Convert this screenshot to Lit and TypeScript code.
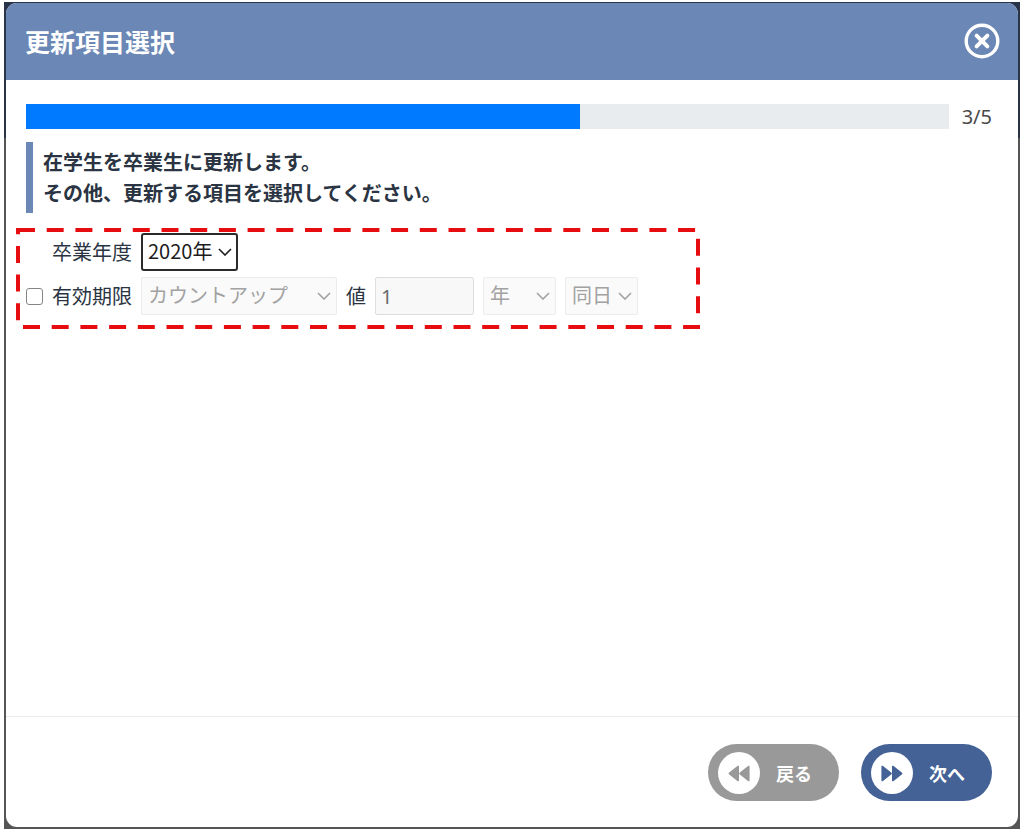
import { LitElement, html, css, svg } from "lit";
import { customElement, property, state } from "lit/decorators.js";

const baseFont = css`"Noto Sans", "Noto Sans CJK JP", sans-serif`;
const jpFont = css`"Noto Sans CJK JP", "Noto Sans", sans-serif`;

@customElement("select-box")
class SelectBox extends LitElement {
  static styles = css`
    :host {
      display: block;
    }
    .wrap {
      display: grid;
      align-items: center;
    }
    .field {
      grid-area: 1 / 1;
      box-sizing: border-box;
      width: 100%;
      height: 38px;
      margin: 0;
      padding: 0 24px 2px 6px;
      appearance: none;
      border: 1px solid #ececec;
      border-radius: 2px;
      background: #fafafa;
      color: #a2a2a2;
      opacity: 1;
      font: 20px/30px ${jpFont};
    }
    .field:enabled {
      border: 2px solid #2b2b2b;
      border-radius: 3px;
      background: #fff;
      color: #1c1c1c;
      padding-left: 5px;
    }
    .arrow {
      grid-area: 1 / 1;
      justify-self: end;
      width: 14px;
      height: 8px;
      margin-right: 6px;
      fill: none;
      stroke: #a2a2a2;
      stroke-width: 1.6;
      pointer-events: none;
    }
    .arrow.on {
      stroke: #1c1c1c;
    }
  `;

  @property() label = "";
  @property({ type: Array }) options: string[] = [];
  @property({ type: Boolean }) disabled = false;

  render() {
    return html`<div class="wrap">
      <select class="field" aria-label=${this.label} ?disabled=${this.disabled}>
        ${this.options.map((o) => html`<option>${o}</option>`)}
      </select>
      <svg class="arrow ${this.disabled ? "" : "on"}" viewBox="0 0 14 8" aria-hidden="true">
        <path d="M1 1l6 6 6-6" />
      </svg>
    </div>`;
  }
}

@customElement("app-root")
class AppRoot extends LitElement {
  static styles = css`
    :host {
      display: flex;
      box-sizing: border-box;
      min-height: 100vh;
      padding: 2px 4px 3px;
      background: #fff;
      color: #2a3442;
      font: 20px/30px ${baseFont};
    }
    .backdrop {
      flex: 1;
      min-width: 0;
      display: flex;
      padding: 1px 2px 2px;
      background: linear-gradient(#2a3448 0, #2a3448 136px, #555 136px);
    }
    .dialog {
      flex: 1;
      min-width: 0;
      display: flex;
      flex-direction: column;
      overflow: hidden;
      border-radius: 11px;
      background: #fff;
    }
    .header {
      display: flex;
      box-sizing: border-box;
      align-items: center;
      justify-content: space-between;
      height: 77px;
      padding: 0 18px 2px 19px;
      background: #6b87b5;
      color: #fff;
    }
    .title {
      margin: 0;
      font: bold 25px/36px ${jpFont};
    }
    .close {
      display: flex;
      padding: 0;
      border: 0;
      background: none;
      cursor: pointer;
    }
    .close-icon {
      width: 36px;
      height: 36px;
      fill: none;
      stroke: #fff;
    }
    .body {
      flex: 1;
      padding: 24px 26px 24px 20px;
    }
    .progress {
      display: flex;
      align-items: center;
      gap: 13px;
      height: 25px;
    }
    .track {
      flex: 1;
      height: 25px;
      background: #e9ecef;
    }
    .bar {
      height: 100%;
      background: #007bff;
    }
    .count {
      color: #4a4a4a;
    }
    .note {
      margin: 13px 0 15px;
      padding: 4px 0 5px 10px;
      border-left: 7px solid #6b87b5;
      font: bold 20px/31px ${jpFont};
    }
    .items {
      position: relative;
      box-sizing: border-box;
      max-width: 684px;
      margin-left: -10px;
      padding: 5px 10px 14px;
      display: grid;
      gap: 6px;
    }
    .outline {
      position: absolute;
      inset: 0;
      width: 100%;
      height: 100%;
      box-sizing: border-box;
      padding: 2px;
      overflow: visible;
      pointer-events: none;
    }
    .outline-rect {
      fill: none;
      stroke: #e60c10;
      stroke-width: 4;
      stroke-dasharray: 17 11.7;
    }
    .row {
      display: flex;
      align-items: center;
      gap: 9px;
      font-family: ${jpFont};
    }
    .mark {
      flex: none;
      box-sizing: border-box;
      width: 17px;
      height: 17px;
      margin: 0;
    }
    .check {
      appearance: none;
      border: 1px solid #858585;
      border-radius: 3px;
      background: #fff;
    }
    .check:checked {
      background: #007bff;
    }
    .label {
      flex: none;
    }
    .year {
      width: 97px;
    }
    .mode {
      width: 196px;
    }
    .short {
      width: 73px;
    }
    .value {
      box-sizing: border-box;
      width: 99px;
      height: 38px;
      padding: 0 5px;
      border: 1px solid #dedede;
      border-radius: 2px;
      background: #f8f8f8;
      color: #6a6a6a;
      font: 20px/30px ${baseFont};
    }
    .footer {
      display: flex;
      justify-content: flex-end;
      gap: 22px;
      padding: 27px 26px 26px;
      border-top: 1px solid #ececec;
    }
    .action {
      display: flex;
      align-items: center;
      gap: 16px;
      width: 131px;
      height: 57px;
      padding: 0 10px;
      border: 0;
      border-radius: 29px;
      background: #999;
      color: #fff;
      font: bold 18px/28px ${jpFont};
      cursor: pointer;
    }
    .action.next {
      background: #456296;
    }
    .disc {
      flex: none;
      width: 42px;
      height: 42px;
    }
    .disc-bg {
      fill: #fff;
    }
    .disc-glyph {
      fill: currentColor;
      stroke: currentColor;
      stroke-width: 1.6;
      stroke-linejoin: round;
      color: #999;
    }
    .next .disc-glyph {
      color: #456296;
    }
  `;

  @state() private step = 3;
  @state() private total = 5;
  @state() private useExpiry = false;

  private disc(path: string) {
    return html`<svg class="disc" viewBox="0 0 42 42" aria-hidden="true">
      ${svg`<circle class="disc-bg" cx="21" cy="21" r="21"/><path class="disc-glyph" d=${path}/>`}
    </svg>`;
  }

  render() {
    const off = !this.useExpiry;
    return html`
      <div class="backdrop">
        <div class="dialog" role="dialog" aria-labelledby="title">
          <header class="header">
            <h1 class="title" id="title">更新項目選択</h1>
            <button class="close" type="button" aria-label="閉じる">
              <svg class="close-icon" viewBox="0 0 36 36" aria-hidden="true">
                <circle cx="18" cy="18" r="15.8" stroke-width="3.4" />
                <path d="M12.6 12.6l10.8 10.8M23.4 12.6l-10.8 10.8" stroke-width="4" stroke-linecap="round" />
              </svg>
            </button>
          </header>
          <main class="body">
            <div class="progress">
              <div class="track" role="progressbar" aria-label="進捗" aria-valuemin="0"
                aria-valuenow=${this.step} aria-valuemax=${this.total}>
                <div class="bar" style="width:${(this.step / this.total) * 100}%"></div>
              </div>
              <span class="count">${this.step}/${this.total}</span>
            </div>
            <p class="note">在学生を卒業生に更新します。<br />その他、更新する項目を選択してください。</p>
            <div class="items">
              <div class="row">
                <span class="mark"></span>
                <span class="label">卒業年度</span>
                <select-box class="year" label="卒業年度" .options=${["2020年"]}></select-box>
              </div>
              <div class="row">
                <input class="mark check" type="checkbox" id="expiry" .checked=${this.useExpiry}
                  @change=${(e: Event) => (this.useExpiry = (e.target as HTMLInputElement).checked)} />
                <label class="label" for="expiry">有効期限</label>
                <select-box class="mode" label="有効期限" .options=${["カウントアップ"]} ?disabled=${off}></select-box>
                <label class="label" for="value">値</label>
                <input class="value" id="value" type="text" value="1" ?disabled=${off} />
                <select-box class="short" label="単位" .options=${["年"]} ?disabled=${off}></select-box>
                <select-box class="short" label="基準日" .options=${["同日"]} ?disabled=${off}></select-box>
              </div>
              <svg class="outline" aria-hidden="true">
                <rect class="outline-rect" width="100%" height="100%" />
              </svg>
            </div>
          </main>
          <footer class="footer">
            <button class="action" type="button">
              ${this.disc("M20.2 14.5v14L11.4 21.5zM30.8 14.5v14L22 21.5z")}<span>戻る</span>
            </button>
            <button class="action next" type="button">
              ${this.disc("M11.2 14.5v14L20 21.5zM21.8 14.5v14L30.6 21.5z")}<span>次へ</span>
            </button>
          </footer>
        </div>
      </div>
    `;
  }
}
